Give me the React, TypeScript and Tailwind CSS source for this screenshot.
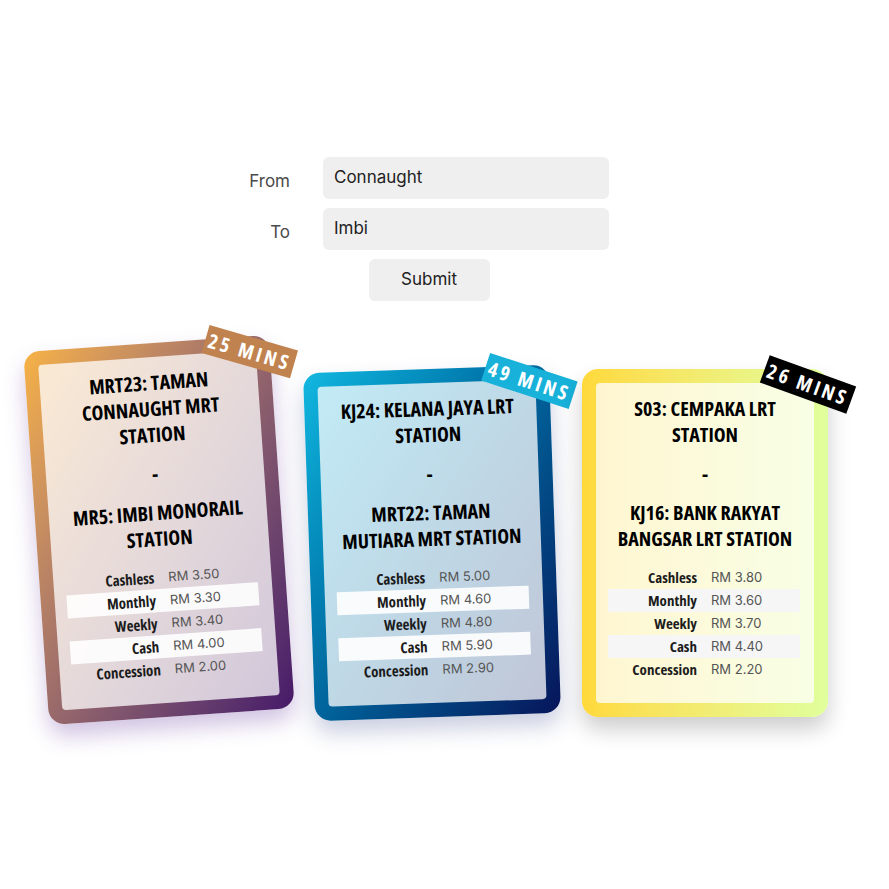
import React from "react";

const cond = "font-['Open_Sans','DejaVu_Sans_Condensed',sans-serif] [font-stretch:75%] font-bold";

const Routes = [
  {
    id: 1,
    from: "MRT23: TAMAN CONNAUGHT MRT STATION",
    to: "MR5: IMBI MONORAIL STATION",
    mins: 25,
    card: "bg-gradient-to-br from-[#f7b244] to-[#471869] -rotate-4 shadow-[0_12px_22px_rgba(90,40,150,0.28)]",
    badge: "bg-[#c0834f]",
    stripe: "bg-white/90",
    fares: ["RM 3.50", "RM 3.30", "RM 3.40", "RM 4.00", "RM 2.00"],
  },
  {
    id: 2,
    from: "KJ24: KELANA JAYA LRT STATION",
    to: "MRT22: TAMAN MUTIARA MRT STATION",
    mins: 49,
    card: "bg-gradient-to-br from-[#12b8e0] to-[#07145a] -rotate-2 shadow-[0_12px_22px_rgba(40,60,130,0.25)]",
    badge: "bg-[#17b1d9]",
    stripe: "bg-white/90",
    fares: ["RM 5.00", "RM 4.60", "RM 4.80", "RM 5.90", "RM 2.90"],
  },
  {
    id: 3,
    from: "S03: CEMPAKA LRT STATION",
    to: "KJ16: BANK RAKYAT BANGSAR LRT STATION",
    mins: 26,
    card: "bg-gradient-to-r from-[#ffd93a] to-[#e0ff9c] shadow-[0_12px_22px_rgba(0,0,0,0.2)]",
    badge: "bg-black",
    stripe: "bg-[#f6f6f6]",
    fares: ["RM 3.80", "RM 3.60", "RM 3.70", "RM 4.40", "RM 2.20"],
  },
];

const labels = ["Cashless", "Monthly", "Weekly", "Cash", "Concession"];

const App = () => {
  return (
    <div className="min-h-[889px] w-full bg-white pt-[157px] font-['Inter',sans-serif]">
      {/* search form */}
      <div className="flex justify-center pr-[31px]">
        <div className="grid grid-cols-[41px_286px] gap-x-[33px] gap-y-[9px]">
          <label className="flex items-center justify-end text-[17px] text-[#4a4a4a] pt-[8px]">From</label>
          <div className="h-[42px] rounded-md bg-[#efefef] px-[11px] flex items-center text-[17px] text-[#222]">
            Connaught
          </div>
          <label className="flex items-center justify-end text-[17px] text-[#4a4a4a] pt-[8px]">To</label>
          <div className="h-[42px] rounded-md bg-[#efefef] px-[11px] flex items-center text-[17px] text-[#222]">
            Imbi
          </div>
          <div className="col-span-2 flex justify-center">
            <button className="h-[42px] w-[121px] rounded-md bg-[#efefef] text-[17px] text-[#222]">
              Submit
            </button>
          </div>
        </div>
      </div>

      {/* results */}
      <div className="mt-[42px] flex items-end gap-[27px] pl-[36px]">
        {Routes.map((r) => (
          <div key={r.id} className={`relative w-[246px] rounded-2xl p-[14px] ${r.card}`}>
            <div
              className={`absolute top-[1px] right-[-26px] h-[29px] w-[92px] rotate-[20deg] flex items-center justify-center text-white text-[20px] tracking-[3px] ${cond} ${r.badge}`}
            >
              {r.mins} MINS
            </div>
            <div className="rounded bg-white/75 px-[12px] pt-[13px] pb-[22px] text-center text-black">
              <div className="px-[4px]">
                <p className={`text-[20px] leading-[26px] ${cond}`}>{r.from}</p>
                <p className={`my-[13px] text-[20px] leading-[26px] ${cond}`}>-</p>
                <p className={`text-[20px] leading-[26px] ${cond}`}>{r.to}</p>
              </div>
              <div className="mt-[14px] w-[192px]">
                {labels.map((l, i) => (
                  <div
                    key={l}
                    className={`grid h-[23px] grid-cols-[95px_97px] items-center ${i % 2 === 1 ? r.stripe : ""}`}
                  >
                    <span className={`pr-[6px] text-right text-[15px] text-[#1c1c1c] ${cond}`}>{l}</span>
                    <span className="pl-[8px] text-left text-[13px] text-[#555]">{r.fares[i]}</span>
                  </div>
                ))}
              </div>
            </div>
          </div>
        ))}
      </div>
    </div>
  );
};

export default App;
